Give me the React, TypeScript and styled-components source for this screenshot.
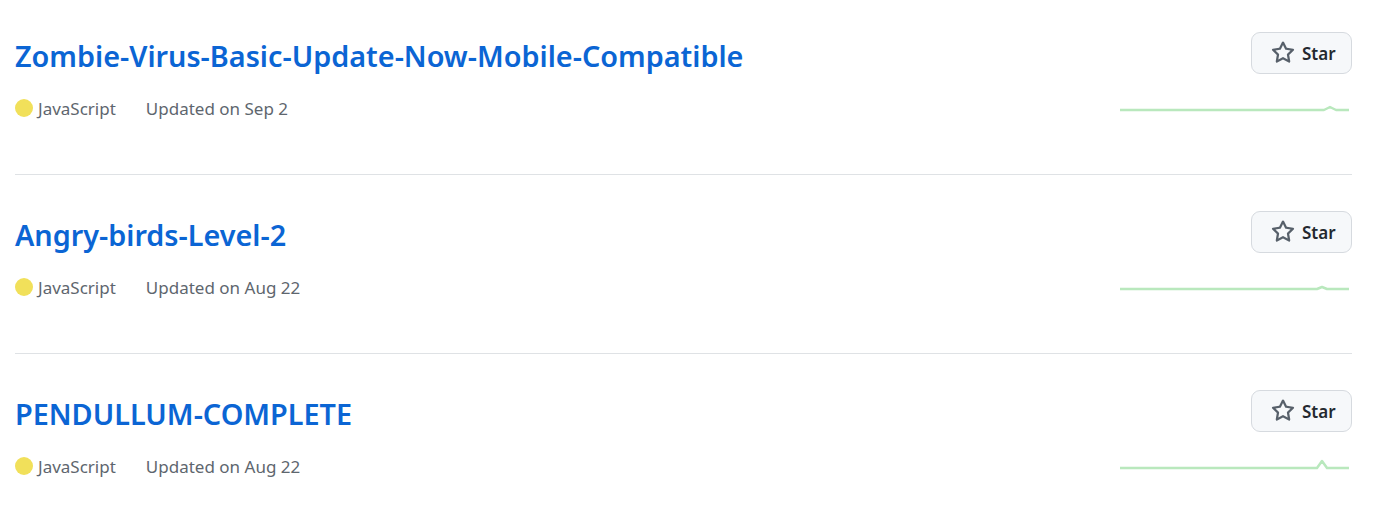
import React from "react";
import styled, { createGlobalStyle } from "styled-components";

const GlobalStyle = createGlobalStyle`
  html, body {
    margin: 0;
    padding: 0;
    background: #ffffff;
    overflow: hidden;
  }
  body {
    font-family: "Noto Sans", "Open Sans", "Liberation Sans", sans-serif;
  }
`;

const List = styled.ul`
  list-style: none;
  margin: 0;
  padding: 0 41px 0 15px;
`;

const Row = styled.li`
  display: grid;
  grid-template-columns: 1fr auto;
  padding: 36px 0 54px;
  border-bottom: 1px solid #dfe2e5;
  &:first-child {
    padding-top: 32px;
  }
`;

const Main = styled.div`
  display: flex;
  flex-direction: column;
  min-width: 0;
`;

const Title = styled.a`
  display: block;
  font-size: 28.8px;
  line-height: 48px;
  font-weight: 600;
  color: #0b65d4;
  text-decoration: none;
  white-space: nowrap;
`;

const Meta = styled.div`
  display: flex;
  align-items: center;
  margin-top: 16px;
  height: 24px;
  font-size: 17px;
  color: #5e666e;
`;

const Lang = styled.span`
  display: inline-flex;
  align-items: center;
  gap: 5px;
  margin-right: 30px;
`;

const Dot = styled.span<{ $color: string }>`
  width: 18px;
  height: 18px;
  border-radius: 50%;
  background: ${(p) => p.$color};
  display: inline-block;
`;

const Side = styled.div`
  display: flex;
  flex-direction: column;
  align-items: flex-end;
`;

const StarButton = styled.button`
  display: inline-flex;
  align-items: center;
  gap: 7px;
  height: 42px;
  width: 101px;
  padding: 0 0 0 19px;
  box-sizing: border-box;
  border: 1px solid #d6dadf;
  border-radius: 9px;
  background: #f6f8fa;
  font-family: inherit;
  font-size: 17px;
  font-weight: 600;
  color: #24292f;
  cursor: pointer;
  svg {
    fill: #57606a;
  }
`;

const Spark = styled.svg`
  display: block;
  margin-top: 10px;
  width: 232px;
  height: 30px;
  overflow: visible;
`;

const StarIcon = () => (
  <svg width="24" height="24" viewBox="0 0 16 16" aria-hidden="true">
    <path d="M8 .25a.75.75 0 0 1 .673.418l1.882 3.815 4.21.612a.75.75 0 0 1 .416 1.279l-3.046 2.97.719 4.192a.751.751 0 0 1-1.088.791L8 12.347l-3.766 1.98a.75.75 0 0 1-1.088-.79l.72-4.194L.818 6.374a.75.75 0 0 1 .416-1.28l4.21-.611L7.327.668A.75.75 0 0 1 8 .25Zm0 2.445L6.615 5.5a.75.75 0 0 1-.564.41l-3.097.45 2.24 2.184a.75.75 0 0 1 .216.664l-.528 3.084 2.769-1.456a.75.75 0 0 1 .698 0l2.77 1.456-.53-3.084a.75.75 0 0 1 .216-.664l2.24-2.183-3.096-.45a.75.75 0 0 1-.564-.41L8 2.694Z" />
  </svg>
);

type Repo = {
  name: string;
  updated: string;
  peakX: number;
  peakH: number;
  peakW: number;
};

const repos: Repo[] = [
  { name: "Zombie-Virus-Basic-Update-Now-Mobile-Compatible", updated: "Sep 2", peakX: 210, peakH: 3, peakW: 6 },
  { name: "Angry-birds-Level-2", updated: "Aug 22", peakX: 202, peakH: 2, peakW: 5 },
  { name: "PENDULLUM-COMPLETE", updated: "Aug 22", peakX: 202, peakH: 7, peakW: 5 },
];

const Sparkline = ({ peakX, peakH, peakW }: { peakX: number; peakH: number; peakW: number }) => {
  const base = 26;
  const d = `M0 ${base} L${peakX - peakW} ${base} L${peakX} ${base - peakH} L${peakX + peakW} ${base} L229 ${base}`;
  return (
    <Spark viewBox="0 0 232 30">
      <path d={d} fill="none" stroke="#b9e8bd" strokeWidth="2.5" strokeLinejoin="round" />
    </Spark>
  );
};

export default function App() {
  return (
    <>
      <GlobalStyle />
      <List>
        {repos.map((r) => (
          <Row key={r.name}>
            <Main>
              <Title href="#">{r.name}</Title>
              <Meta>
                <Lang>
                  <Dot $color="#f1e05a" />
                  JavaScript
                </Lang>
                <span>Updated on {r.updated}</span>
              </Meta>
            </Main>
            <Side>
              <StarButton>
                <StarIcon />
                Star
              </StarButton>
              <Sparkline peakX={r.peakX} peakH={r.peakH} peakW={r.peakW} />
            </Side>
          </Row>
        ))}
      </List>
    </>
  );
}
